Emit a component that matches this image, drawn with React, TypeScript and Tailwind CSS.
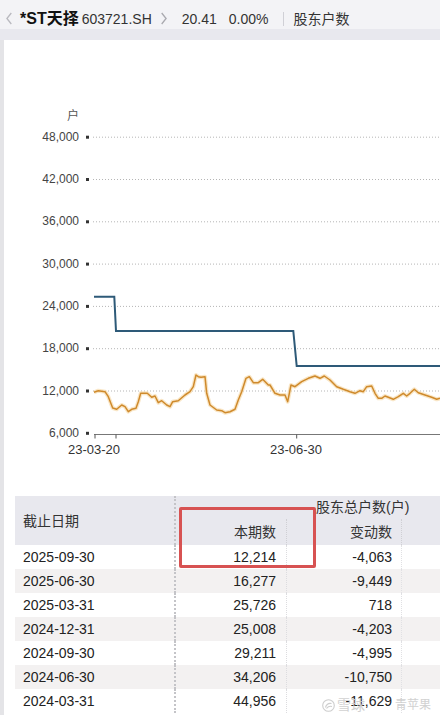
import React from "react";

const FONT = "'Liberation Sans','Noto Sans CJK SC',sans-serif";

const yTicks = [48000, 42000, 36000, 30000, 24000, 18000, 12000, 6000];
const yOf = (v: number) => 433.3 - ((v - 6000) / 6000) * 42.3;

const orange: [number, number][] = [
  [94, 392.3], [98.3, 390.7], [105, 391.7], [108.3, 396.7], [112.7, 408], [116.7, 409.3],
  [121.7, 405], [125, 406.7], [128.3, 411.7], [131.7, 409.3], [136, 408.3], [138.3, 401.7],
  [140.7, 393.3], [147.3, 393.3], [151.7, 397.3], [155, 396], [158.3, 402.7], [161.7, 400.7],
  [166.7, 405], [170, 406.7], [172.7, 401.7], [178.3, 400.7], [185, 395], [190, 391.7],
  [193.3, 386.7], [196, 375], [198.3, 376.7], [201, 377.3], [205, 376.7], [206.7, 393.3],
  [210, 405], [216.7, 410], [221.7, 410.7], [225, 412.7], [230, 411.7], [235, 409.3],
  [238.3, 400], [241.7, 391.7], [246, 378.3], [249.3, 376.7], [253.3, 382.7], [258.3, 382.7],
  [262.7, 379.3], [268.3, 385], [270, 385], [275, 393.3], [280, 395], [285, 395],
  [287.7, 401.7], [291, 385], [295, 386.7], [301.7, 381.7], [308.3, 378.3], [315, 376],
  [320, 378.3], [324.3, 376], [330, 380], [336.7, 386.7], [343.3, 389.3], [350, 391.7],
  [355, 393.3], [360, 390.7], [363.3, 391.7], [366.7, 386.7], [371.7, 386], [375, 393.3],
  [378.3, 398.3], [381.7, 398.3], [385, 396], [388.3, 397.3], [393.3, 399.3], [398.3, 396.7],
  [403.3, 393.3], [406.7, 396], [410, 393.3], [414.3, 389.3], [418.3, 392.7], [425, 395],
  [431.7, 397.3], [436.7, 399.3], [440, 398.3],
];
const orangeD = "M" + orange.map(([x, y]) => `${x},${y}`).join(" L");

const rows = [
  ["2025-09-30", "12,214", "-4,063"],
  ["2025-06-30", "16,277", "-9,449"],
  ["2025-03-31", "25,726", "718"],
  ["2024-12-31", "25,008", "-4,203"],
  ["2024-09-30", "29,211", "-4,995"],
  ["2024-06-30", "34,206", "-10,750"],
  ["2024-03-31", "44,956", "-11,629"],
];

function Chart() {
  return (
    <svg width={436} height={440} viewBox="4 40 436 440" style={{ fontFamily: FONT, display: "block" }}>
      <text x={73} y={117} fontSize={12} fill="#555" textAnchor="middle" dominantBaseline="middle">户</text>
      {yTicks.map((v) => {
        const y = yOf(v);
        return (
          <g key={v}>
            <text x={79} y={y + 0.5} fontSize={12} fill="#444" textAnchor="end" dominantBaseline="middle">
              {v.toLocaleString("en-US")}
            </text>
            <rect x={86} y={y - 1.5} width={3} height={3} fill="#333" />
            {v !== 6000 && (
              <line x1={93} x2={440} y1={y} y2={y} stroke="#b5b5b5" strokeWidth={1} strokeDasharray="1 2" />
            )}
          </g>
        );
      })}
      <path d="M94,296.7 H114.3 L116,331 H293.3 L296.7,366 H440" fill="none" stroke="#2e5a78" strokeWidth={2} />
      <path d={orangeD} fill="none" stroke="#f7dcae" strokeWidth={4} strokeOpacity={0.7} strokeLinejoin="round" />
      <path d={orangeD} fill="none" stroke="#cf8a2c" strokeWidth={1.5} strokeLinejoin="round" />
      <line x1={94} x2={440} y1={434.5} y2={434.5} stroke="#777" strokeWidth={1} />
      {[95, 116, 296.7].map((x) => (
        <line key={x} x1={x} x2={x} y1={434.5} y2={438.5} stroke="#555" strokeWidth={1} />
      ))}
      <text x={94} y={451} fontSize={13} fill="#333" textAnchor="middle" dominantBaseline="middle">23-03-20</text>
      <text x={296} y={451} fontSize={13} fill="#333" textAnchor="middle" dominantBaseline="middle">23-06-30</text>
    </svg>
  );
}

function Chevron({ dir, color }: { dir: "left" | "right"; color: string }) {
  return (
    <svg width={6} height={13} viewBox="0 0 6 13" className="block">
      <path
        d={dir === "left" ? "M5.3,1 L0.9,6.5 L5.3,12" : "M0.7,1 L5.1,6.5 L0.7,12"}
        fill="none"
        stroke={color}
        strokeWidth={1.3}
      />
    </svg>
  );
}

function XueqiuLogo() {
  return (
    <svg width={13} height={13} viewBox="0 0 13 13">
      <circle cx={6.5} cy={6.5} r={5.8} fill="none" stroke="#c9c9c9" strokeWidth={1.1} />
      <path d="M3.5,8.5 C4.5,5 7,4 9.5,4.5" fill="none" stroke="#c9c9c9" strokeWidth={1.1} />
      <path d="M4.5,9.5 C6,7.5 8,7 10,7.5" fill="none" stroke="#c9c9c9" strokeWidth={1.1} />
    </svg>
  );
}

export default function App() {
  return (
    <div className="relative w-[440px] h-[715px] overflow-hidden bg-white text-[#222] font-['Liberation_Sans','Noto_Sans_CJK_SC',sans-serif]">
      {/* Header */}
      <div className="h-[29px] bg-[#f3f3f6] flex items-end pb-[1px] whitespace-nowrap leading-[18px]">
        <span className="ml-[6px] mb-[3px]"><Chevron dir="left" color="#b9b9bf" /></span>
        <span className="ml-[8px] text-[16px] font-bold text-[#111]">*ST天择</span>
        <span className="ml-[3px] text-[14px] text-[#333]">603721.SH</span>
        <span className="ml-[9px] mb-[3px]"><Chevron dir="right" color="#a9a9af" /></span>
        <span className="ml-[15px] text-[14px] text-[#333]">20.41</span>
        <span className="ml-[12px] text-[14px] text-[#333]">0.00%</span>
        <span className="ml-[14px] w-px h-[14px] mb-[2px] bg-[#d0d0d6]" />
        <span className="ml-[10px] text-[14px] text-[#333]">股东户数</span>
      </div>
      <div className="h-[11px] bg-[#e8e8ee]" />

      {/* Panel */}
      <div className="flex h-[675px]">
        <div className="w-[4px] bg-[#e4e4e7]" />
        <div className="w-[436px] flex flex-col">
          <Chart />
          <div className="mt-[16px] ml-[11px] w-[470px] text-[14px] leading-[24px]">
            {/* table header */}
            <div className="grid grid-cols-[161px_111px_115px_83px] bg-[#e8e8ee] h-[49px] text-[#333]">
              <div className="row-span-2 flex items-center pl-[8px] pt-[1px] border-r-2 border-dotted border-[#c4c4c8]">截止日期</div>
              <div className="col-span-3 h-[23px] flex items-center pl-[140px] leading-[23px]">股东总户数(户)</div>
              <div className="h-[26px] flex items-center justify-end pr-[10px] border-r border-dotted border-[#cfcfd4]">本期数</div>
              <div className="h-[26px] flex items-center justify-end pr-[9px] border-r border-dotted border-[#cfcfd4]">变动数</div>
              <div className="h-[26px]" />
            </div>
            {rows.map((r, i) => (
              <div
                key={r[0]}
                className={`grid grid-cols-[161px_111px_115px_83px] h-[24px] ${i % 2 === 1 ? "bg-[#f3f1f1]" : "bg-white"}`}
              >
                <div className="pl-[8px] border-r-2 border-dotted border-[#c4c4c8]">{r[0]}</div>
                <div className="text-right pr-[10px] border-r border-dotted border-[#dcdcdf]">{r[1]}</div>
                <div className="text-right pr-[9px] border-r border-dotted border-[#e0e0e3]">{r[2]}</div>
                <div />
              </div>
            ))}
          </div>
        </div>
      </div>

      {/* red annotation box */}
      <div className="absolute left-[179px] top-[507px] w-[137px] h-[61px] border-[3px] border-[#d75252] rounded-[2px]" />

      {/* watermark */}
      <div className="absolute left-[322px] top-[697px] flex items-center gap-[2px] text-[#cdcdcd] leading-[16px] pointer-events-none opacity-90">
        <XueqiuLogo />
        <span className="text-[14px]">雪球</span>
        <span className="ml-[28px] text-[12px]">青苹果</span>
      </div>
    </div>
  );
}
